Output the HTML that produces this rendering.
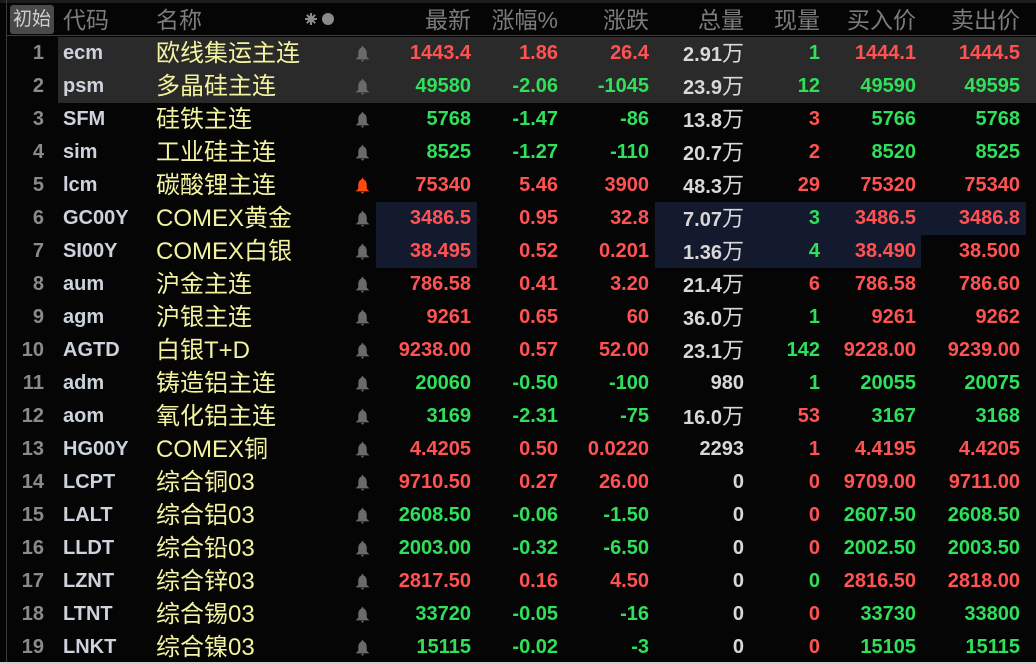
<!DOCTYPE html>
<html><head><meta charset="utf-8"><style>
*{margin:0;padding:0;box-sizing:border-box}
body{width:1036px;height:664px;background:#050505;overflow:hidden;position:relative;font-family:"Liberation Sans","Noto Sans CJK SC",sans-serif}
.top{position:absolute;left:0;top:0;width:1036px;height:3px;background:#1c1c1c}
.vl{position:absolute;left:6px;top:0;width:1px;height:664px;background:#3a3a3a}
.hd{position:absolute;left:7px;top:3px;width:1029px;height:33px;border-bottom:1px solid #3c3c3c;color:#7c7c7c;font-size:23px;line-height:34px}
.hd span{position:absolute;white-space:nowrap}
.btn{left:3px;top:2px;width:44px;height:29px;background:#4a4a4a;border-radius:3px;color:#cfcfcf;font-size:19px;line-height:29px!important;text-align:center}
.r{position:absolute;left:7px;width:1029px;height:33px;font-size:20px;line-height:33px;font-weight:bold}
.r span{position:absolute;white-space:nowrap}
.r svg{position:absolute;left:348px;top:8px;width:15px;height:17px}
.sel{background:#2a2a2a;left:58px;width:978px}
.n{right:992px;color:#8a8a8a;font-weight:bold}
.c{left:56px;color:#cdd3dd}
.m{left:149px;color:#f3f3a0;font-weight:normal;font-size:24px}
.v1{right:565px}.v2{right:478px}.v3{right:387px}.v4{right:292px;color:#d8d8d8}.v5{right:216px}.v6{right:120px}.v7{right:16px}
.w{font-weight:normal;font-size:22px}
.R{color:#ff5252}.G{color:#2ee05a}
.box{position:absolute;background:#141a2e}
.bot{position:absolute;left:0;top:662px;width:1036px;height:2px;background:#cfcfcf}
</style></head><body>
<div class="top"></div>
<div class="box" style="left:376px;top:202px;width:101px;height:66px"></div>
<div class="box" style="left:655px;top:202px;width:371px;height:33px"></div>
<div class="box" style="left:655px;top:235px;width:266px;height:33px"></div>
<div class="vl"></div>
<div class="hd">
<span class="btn">初始</span>
<span style="left:56px">代码</span>
<span style="left:149px">名称</span>
<svg style="position:absolute;left:297px;top:9px" width="32" height="14" viewBox="0 0 32 14"><g stroke="#8a8a8a" stroke-width="2"><line x1="7" y1="1" x2="7" y2="13"/><line x1="1" y1="7" x2="13" y2="7"/><line x1="2.8" y1="2.8" x2="11.2" y2="11.2"/><line x1="11.2" y1="2.8" x2="2.8" y2="11.2"/></g><circle cx="7" cy="7" r="3.5" fill="#8a8a8a"/><circle cx="24" cy="7" r="6" fill="#8a8a8a"/></svg>
<span style="right:565px">最新</span>
<span style="right:478px">涨幅%</span>
<span style="right:387px">涨跌</span>
<span style="right:292px">总量</span>
<span style="right:216px">现量</span>
<span style="right:120px">买入价</span>
<span style="right:16px">卖出价</span>
</div>

<div class="sel" style="position:absolute;top:37px;height:66px"></div>

<div class="r" style="top:37px"><span class="n">1</span><span class="c">ecm</span><span class="m">欧线集运主连</span><svg viewBox="0 0 14 16"><path d="M7 0.5L8.2 2.5Q11 3.5 11 8L11 11L13.5 13.5L0.5 13.5L3 11L3 8Q3 3.5 5.8 2.5Z M5.5 14L8.5 14L7 16Z" fill="#6a6a6a"/></svg><span class="v1 R">1443.4</span><span class="v2 R">1.86</span><span class="v3 R">26.4</span><span class="v4">2.91<b class="w">万</b></span><span class="v5 G">1</span><span class="v6 R">1444.1</span><span class="v7 R">1444.5</span></div>
<div class="r" style="top:70px"><span class="n">2</span><span class="c">psm</span><span class="m">多晶硅主连</span><svg viewBox="0 0 14 16"><path d="M7 0.5L8.2 2.5Q11 3.5 11 8L11 11L13.5 13.5L0.5 13.5L3 11L3 8Q3 3.5 5.8 2.5Z M5.5 14L8.5 14L7 16Z" fill="#6a6a6a"/></svg><span class="v1 G">49580</span><span class="v2 G">-2.06</span><span class="v3 G">-1045</span><span class="v4">23.9<b class="w">万</b></span><span class="v5 G">12</span><span class="v6 G">49590</span><span class="v7 G">49595</span></div>
<div class="r" style="top:103px"><span class="n">3</span><span class="c">SFM</span><span class="m">硅铁主连</span><svg viewBox="0 0 14 16"><path d="M7 0.5L8.2 2.5Q11 3.5 11 8L11 11L13.5 13.5L0.5 13.5L3 11L3 8Q3 3.5 5.8 2.5Z M5.5 14L8.5 14L7 16Z" fill="#6a6a6a"/></svg><span class="v1 G">5768</span><span class="v2 G">-1.47</span><span class="v3 G">-86</span><span class="v4">13.8<b class="w">万</b></span><span class="v5 R">3</span><span class="v6 G">5766</span><span class="v7 G">5768</span></div>
<div class="r" style="top:136px"><span class="n">4</span><span class="c">sim</span><span class="m">工业硅主连</span><svg viewBox="0 0 14 16"><path d="M7 0.5L8.2 2.5Q11 3.5 11 8L11 11L13.5 13.5L0.5 13.5L3 11L3 8Q3 3.5 5.8 2.5Z M5.5 14L8.5 14L7 16Z" fill="#6a6a6a"/></svg><span class="v1 G">8525</span><span class="v2 G">-1.27</span><span class="v3 G">-110</span><span class="v4">20.7<b class="w">万</b></span><span class="v5 R">2</span><span class="v6 G">8520</span><span class="v7 G">8525</span></div>
<div class="r" style="top:169px"><span class="n">5</span><span class="c">lcm</span><span class="m">碳酸锂主连</span><svg viewBox="0 0 14 16"><path d="M7 0.5L8.2 2.5Q11 3.5 11 8L11 11L13.5 13.5L0.5 13.5L3 11L3 8Q3 3.5 5.8 2.5Z M5.5 14L8.5 14L7 16Z" fill="#ff4a10"/></svg><span class="v1 R">75340</span><span class="v2 R">5.46</span><span class="v3 R">3900</span><span class="v4">48.3<b class="w">万</b></span><span class="v5 R">29</span><span class="v6 R">75320</span><span class="v7 R">75340</span></div>
<div class="r" style="top:202px"><span class="n">6</span><span class="c">GC00Y</span><span class="m">COMEX黄金</span><svg viewBox="0 0 14 16"><path d="M7 0.5L8.2 2.5Q11 3.5 11 8L11 11L13.5 13.5L0.5 13.5L3 11L3 8Q3 3.5 5.8 2.5Z M5.5 14L8.5 14L7 16Z" fill="#6a6a6a"/></svg><span class="v1 R">3486.5</span><span class="v2 R">0.95</span><span class="v3 R">32.8</span><span class="v4">7.07<b class="w">万</b></span><span class="v5 G">3</span><span class="v6 R">3486.5</span><span class="v7 R">3486.8</span></div>
<div class="r" style="top:235px"><span class="n">7</span><span class="c">SI00Y</span><span class="m">COMEX白银</span><svg viewBox="0 0 14 16"><path d="M7 0.5L8.2 2.5Q11 3.5 11 8L11 11L13.5 13.5L0.5 13.5L3 11L3 8Q3 3.5 5.8 2.5Z M5.5 14L8.5 14L7 16Z" fill="#6a6a6a"/></svg><span class="v1 R">38.495</span><span class="v2 R">0.52</span><span class="v3 R">0.201</span><span class="v4">1.36<b class="w">万</b></span><span class="v5 G">4</span><span class="v6 R">38.490</span><span class="v7 R">38.500</span></div>
<div class="r" style="top:268px"><span class="n">8</span><span class="c">aum</span><span class="m">沪金主连</span><svg viewBox="0 0 14 16"><path d="M7 0.5L8.2 2.5Q11 3.5 11 8L11 11L13.5 13.5L0.5 13.5L3 11L3 8Q3 3.5 5.8 2.5Z M5.5 14L8.5 14L7 16Z" fill="#6a6a6a"/></svg><span class="v1 R">786.58</span><span class="v2 R">0.41</span><span class="v3 R">3.20</span><span class="v4">21.4<b class="w">万</b></span><span class="v5 R">6</span><span class="v6 R">786.58</span><span class="v7 R">786.60</span></div>
<div class="r" style="top:301px"><span class="n">9</span><span class="c">agm</span><span class="m">沪银主连</span><svg viewBox="0 0 14 16"><path d="M7 0.5L8.2 2.5Q11 3.5 11 8L11 11L13.5 13.5L0.5 13.5L3 11L3 8Q3 3.5 5.8 2.5Z M5.5 14L8.5 14L7 16Z" fill="#6a6a6a"/></svg><span class="v1 R">9261</span><span class="v2 R">0.65</span><span class="v3 R">60</span><span class="v4">36.0<b class="w">万</b></span><span class="v5 G">1</span><span class="v6 R">9261</span><span class="v7 R">9262</span></div>
<div class="r" style="top:334px"><span class="n">10</span><span class="c">AGTD</span><span class="m">白银T+D</span><svg viewBox="0 0 14 16"><path d="M7 0.5L8.2 2.5Q11 3.5 11 8L11 11L13.5 13.5L0.5 13.5L3 11L3 8Q3 3.5 5.8 2.5Z M5.5 14L8.5 14L7 16Z" fill="#6a6a6a"/></svg><span class="v1 R">9238.00</span><span class="v2 R">0.57</span><span class="v3 R">52.00</span><span class="v4">23.1<b class="w">万</b></span><span class="v5 G">142</span><span class="v6 R">9228.00</span><span class="v7 R">9239.00</span></div>
<div class="r" style="top:367px"><span class="n">11</span><span class="c">adm</span><span class="m">铸造铝主连</span><svg viewBox="0 0 14 16"><path d="M7 0.5L8.2 2.5Q11 3.5 11 8L11 11L13.5 13.5L0.5 13.5L3 11L3 8Q3 3.5 5.8 2.5Z M5.5 14L8.5 14L7 16Z" fill="#6a6a6a"/></svg><span class="v1 G">20060</span><span class="v2 G">-0.50</span><span class="v3 G">-100</span><span class="v4">980</span><span class="v5 G">1</span><span class="v6 G">20055</span><span class="v7 G">20075</span></div>
<div class="r" style="top:400px"><span class="n">12</span><span class="c">aom</span><span class="m">氧化铝主连</span><svg viewBox="0 0 14 16"><path d="M7 0.5L8.2 2.5Q11 3.5 11 8L11 11L13.5 13.5L0.5 13.5L3 11L3 8Q3 3.5 5.8 2.5Z M5.5 14L8.5 14L7 16Z" fill="#6a6a6a"/></svg><span class="v1 G">3169</span><span class="v2 G">-2.31</span><span class="v3 G">-75</span><span class="v4">16.0<b class="w">万</b></span><span class="v5 R">53</span><span class="v6 G">3167</span><span class="v7 G">3168</span></div>
<div class="r" style="top:433px"><span class="n">13</span><span class="c">HG00Y</span><span class="m">COMEX铜</span><svg viewBox="0 0 14 16"><path d="M7 0.5L8.2 2.5Q11 3.5 11 8L11 11L13.5 13.5L0.5 13.5L3 11L3 8Q3 3.5 5.8 2.5Z M5.5 14L8.5 14L7 16Z" fill="#6a6a6a"/></svg><span class="v1 R">4.4205</span><span class="v2 R">0.50</span><span class="v3 R">0.0220</span><span class="v4">2293</span><span class="v5 R">1</span><span class="v6 R">4.4195</span><span class="v7 R">4.4205</span></div>
<div class="r" style="top:466px"><span class="n">14</span><span class="c">LCPT</span><span class="m">综合铜03</span><svg viewBox="0 0 14 16"><path d="M7 0.5L8.2 2.5Q11 3.5 11 8L11 11L13.5 13.5L0.5 13.5L3 11L3 8Q3 3.5 5.8 2.5Z M5.5 14L8.5 14L7 16Z" fill="#6a6a6a"/></svg><span class="v1 R">9710.50</span><span class="v2 R">0.27</span><span class="v3 R">26.00</span><span class="v4">0</span><span class="v5 R">0</span><span class="v6 R">9709.00</span><span class="v7 R">9711.00</span></div>
<div class="r" style="top:499px"><span class="n">15</span><span class="c">LALT</span><span class="m">综合铝03</span><svg viewBox="0 0 14 16"><path d="M7 0.5L8.2 2.5Q11 3.5 11 8L11 11L13.5 13.5L0.5 13.5L3 11L3 8Q3 3.5 5.8 2.5Z M5.5 14L8.5 14L7 16Z" fill="#6a6a6a"/></svg><span class="v1 G">2608.50</span><span class="v2 G">-0.06</span><span class="v3 G">-1.50</span><span class="v4">0</span><span class="v5 R">0</span><span class="v6 G">2607.50</span><span class="v7 G">2608.50</span></div>
<div class="r" style="top:532px"><span class="n">16</span><span class="c">LLDT</span><span class="m">综合铅03</span><svg viewBox="0 0 14 16"><path d="M7 0.5L8.2 2.5Q11 3.5 11 8L11 11L13.5 13.5L0.5 13.5L3 11L3 8Q3 3.5 5.8 2.5Z M5.5 14L8.5 14L7 16Z" fill="#6a6a6a"/></svg><span class="v1 G">2003.00</span><span class="v2 G">-0.32</span><span class="v3 G">-6.50</span><span class="v4">0</span><span class="v5 R">0</span><span class="v6 G">2002.50</span><span class="v7 G">2003.50</span></div>
<div class="r" style="top:565px"><span class="n">17</span><span class="c">LZNT</span><span class="m">综合锌03</span><svg viewBox="0 0 14 16"><path d="M7 0.5L8.2 2.5Q11 3.5 11 8L11 11L13.5 13.5L0.5 13.5L3 11L3 8Q3 3.5 5.8 2.5Z M5.5 14L8.5 14L7 16Z" fill="#6a6a6a"/></svg><span class="v1 R">2817.50</span><span class="v2 R">0.16</span><span class="v3 R">4.50</span><span class="v4">0</span><span class="v5 G">0</span><span class="v6 R">2816.50</span><span class="v7 R">2818.00</span></div>
<div class="r" style="top:598px"><span class="n">18</span><span class="c">LTNT</span><span class="m">综合锡03</span><svg viewBox="0 0 14 16"><path d="M7 0.5L8.2 2.5Q11 3.5 11 8L11 11L13.5 13.5L0.5 13.5L3 11L3 8Q3 3.5 5.8 2.5Z M5.5 14L8.5 14L7 16Z" fill="#6a6a6a"/></svg><span class="v1 G">33720</span><span class="v2 G">-0.05</span><span class="v3 G">-16</span><span class="v4">0</span><span class="v5 R">0</span><span class="v6 G">33730</span><span class="v7 G">33800</span></div>
<div class="r" style="top:631px"><span class="n">19</span><span class="c">LNKT</span><span class="m">综合镍03</span><svg viewBox="0 0 14 16"><path d="M7 0.5L8.2 2.5Q11 3.5 11 8L11 11L13.5 13.5L0.5 13.5L3 11L3 8Q3 3.5 5.8 2.5Z M5.5 14L8.5 14L7 16Z" fill="#6a6a6a"/></svg><span class="v1 G">15115</span><span class="v2 G">-0.02</span><span class="v3 G">-3</span><span class="v4">0</span><span class="v5 R">0</span><span class="v6 G">15105</span><span class="v7 G">15115</span></div>
<div class="bot"></div>
</body></html>
